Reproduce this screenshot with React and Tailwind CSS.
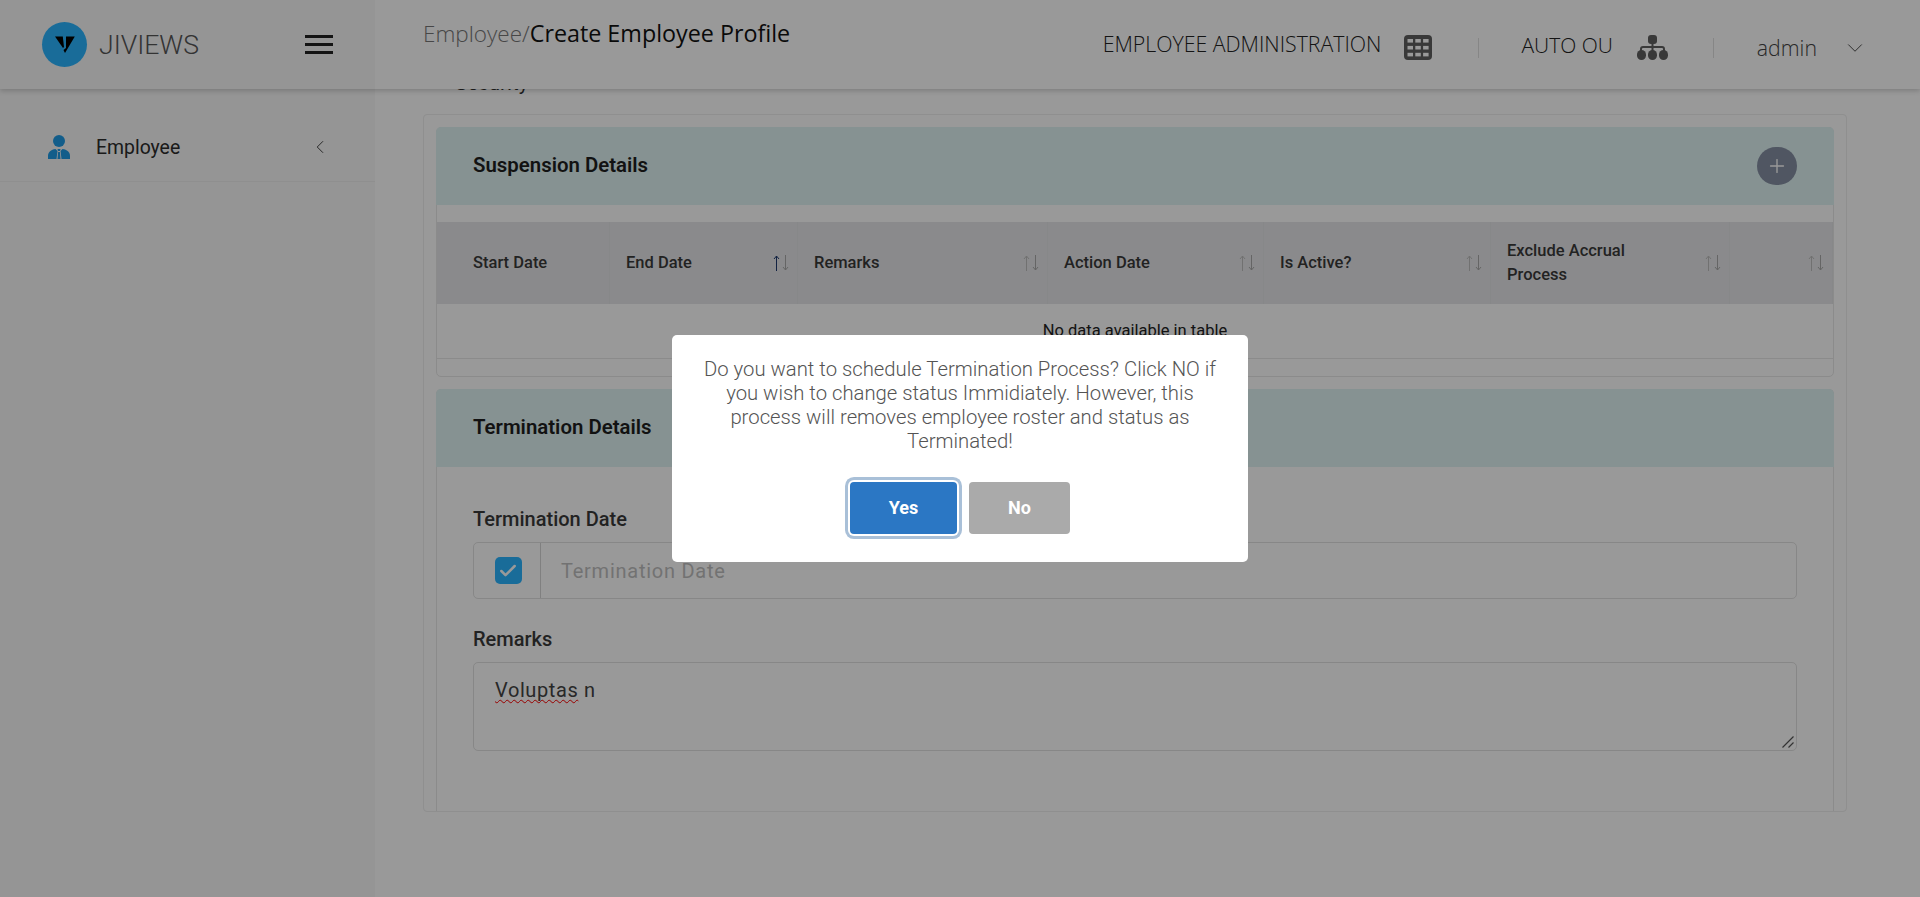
import React from "react";
import { ChevronDown, ChevronLeft, Plus, Check } from "lucide-react";

const roboto = "font-['Roboto',sans-serif]";

function SortIcon({ active }) {
  return (
    <svg width="18" height="18" viewBox="0 0 18 18" fill="none" strokeWidth="1" className="shrink-0">
      <path d="M4.500 17V2M2 5l2.500-3L7 5" stroke={active ? "#1f3a6e" : "#bdbdbd"} />
      <path d="M13.500 1v15M11 13l2.500 3 2.500-3" stroke="#a8a8a8" />
    </svg>
  );
}

function TableGlyph() {
  const cells = [];
  for (let r = 0; r < 3; r++) for (let c = 0; c < 3; c++) cells.push([c, r]);
  return (
    <svg width="28" height="25" viewBox="0 0 28 25" className="block">
      <rect width="28" height="25" rx="4" fill="#5f5f5f" />
      {cells.map(([c, r]) => (
        <rect key={`${c}-${r}`} x={3.5 + c * 7.8} y={4 + r * 6.9} width="5.5" height="3.6" fill="#ffffff" />
      ))}
    </svg>
  );
}

function SitemapGlyph() {
  return (
    <svg width="31" height="25" viewBox="0 0 31 25" fill="#5f5f5f" className="block">
      <rect x="11" y="0" width="9" height="9" rx="3" />
      <path d="M14.500 9h2v2h8.500a3 3 0 0 1 3 3v2h-2v-2a1 1 0 0 0-1-1h-8.500v3h-2v-3H6a1 1 0 0 0-1 1v2H3v-2a3 3 0 0 1 3-3h8.500z" />
      <rect x="0" y="15" width="9" height="10" rx="4.5" />
      <rect x="11" y="15" width="9" height="10" rx="4.5" />
      <rect x="22" y="15" width="9" height="10" rx="4.5" />
    </svg>
  );
}

function LogoMark() {
  return (
    <div className="flex h-[45px] w-[45px] items-center justify-center rounded-full bg-[#2bb5ff]">
      <svg width="20" height="17" viewBox="0 0 20 17" fill="#000" className="block">
        <path d="M0 .5h7.800l1.200 10.500-1 1z" />
        <path d="M11 .5h8.800L10 17l-1.500-3L11 12z" />
      </svg>
    </div>
  );
}

function PersonIcon() {
  return (
    <svg width="22" height="24" viewBox="0 0 22 24" fill="#1e9be6" className="block">
      <circle cx="11" cy="6" r="6" />
      <path d="M0 24v-3c0-4 3-6.500 7.500-7l2 2-1 8z" />
      <path d="M22 24v-3c0-4-3-6.500-7.500-7l-2 2 1 8z" />
      <path d="M9.500 14h3l-.5 2h-2zM10.100 17h1.800l.6 7H9.500z" />
    </svg>
  );
}

const cols = [
  { label: "Start Date", w: "w-[173px]", pl: "pl-[36px]" },
  { label: "End Date", w: "w-[188px]", active: true },
  { label: "Remarks", w: "w-[250px]" },
  { label: "Action Date", w: "w-[216px]" },
  { label: "Is Active?", w: "w-[227px]" },
  { label: "Exclude Accrual Process", w: "w-[239px]" },
  { label: "", w: "flex-1" },
];

function PanelHeader({ title, action }) {
  return (
    <div className="-mx-px -mt-px flex h-[78px] items-center justify-between rounded-t-[5px] bg-[#dff3f3] pl-[37px] pr-[37px]">
      <h3 className="pb-[2px] text-[20.400px] font-semibold text-[#1f1f1f]">{title}</h3>
      {action}
    </div>
  );
}

export default function App() {
  return (
    <div className={`${roboto} relative flex h-screen flex-col overflow-hidden bg-white text-[#333]`}>
      <header className="relative z-10 flex h-[89px] shrink-0 bg-white shadow-[0_2px_5px_rgba(0,0,0,0.18)]">
        <div className="flex w-[375px] shrink-0 items-center justify-between bg-[#f8f8f8] pl-[42px] pr-[42px]">
          <div className="flex items-center gap-[12px]">
            <LogoMark />
            <span className="text-[26.6px] font-light text-[#555]">JIVIEWS</span>
          </div>
          <div className="flex w-[28px] flex-col gap-[5px]">
            <span className="h-[3px] bg-[#222]" />
            <span className="h-[3px] bg-[#222]" />
            <span className="h-[3px] bg-[#222]" />
          </div>
        </div>
        <div className="flex min-w-0 flex-1 items-start justify-between pl-[48px] pr-[52px]">
          <div className="mt-[17px] whitespace-nowrap font-['Open_Sans',sans-serif] leading-[32px]">
            <span className="text-[22.5px] font-light text-[#777]">Employee/</span>
            <span className="text-[23.300px] font-medium text-[#111]">Create Employee Profile</span>
          </div>
          <div className="mt-[34px] flex items-center whitespace-nowrap font-['Open_Sans',sans-serif] text-[#222]">
            <span className="mb-[7px] text-[21.300px] font-light leading-[20px]">EMPLOYEE ADMINISTRATION</span>
            <span className="ml-[23px]"><TableGlyph /></span>
            <span className="ml-[46px] h-[20px] w-px bg-[#e0e0e0]" />
            <span className="mb-[5px] ml-[42px] text-[21px] font-light leading-[20px]">AUTO OU</span>
            <span className="ml-[24px]"><SitemapGlyph /></span>
            <span className="ml-[45px] h-[20px] w-px bg-[#e0e0e0]" />
            <span className="ml-[43px] text-[21.300px] font-light leading-[24px] text-[#444]">admin</span>
            <ChevronDown size={26} strokeWidth={0.8} className="ml-[25px] text-[#333]" />
          </div>
        </div>
      </header>

      <div className="flex min-h-0 flex-1">
        <aside className="w-[375px] shrink-0 bg-[#f8f8f8]">
          <nav className="mt-[28px] flex h-[65px] items-center border-b border-[#eeeeee] pb-[4px] pl-[48px] pr-[44px]">
            <PersonIcon />
            <span className="ml-[26px] mt-[2px] flex-1 text-[19.400px] text-[#2c2c2c]">Employee</span>
            <ChevronLeft size={22} strokeWidth={1} className="text-[#333]" />
          </nav>
        </aside>

        <main className="min-w-0 flex-1 pl-[48px] pr-[73px]">
          <div className="-mt-[18px] h-[43px] pl-[32px] text-[20.500px] leading-[24px] text-[#333]">Security</div>

          <section className="flex h-[698px] flex-col gap-[12px] rounded-[4px] border border-[#eeeeee] px-[12px] pt-[12px]">
            <div className="h-[250px] shrink-0 rounded-[5px] border border-[#e8e8e8]">
              <PanelHeader
                title="Suspension Details"
                action={
                  <button className="flex h-[38px] w-[40px] items-center justify-center rounded-full bg-[#858fa3] text-white">
                    <Plus size={22} strokeWidth={1.5} />
                  </button>
                }
              />
              <div className="mt-[17px] flex h-[82px] bg-[#e6e7e9]">
                {cols.map((c, i) => (
                  <div
                    key={i}
                    className={`${c.w} ${c.pl || "pl-[16px]"} flex items-center justify-between border-r border-[#e2e3e5] pr-[7px] text-[16.500px] font-medium leading-[24px] text-[#3a3a3a]`}
                  >
                    <span className="max-w-[160px]">{c.label}</span>
                    {i > 0 && <SortIcon active={c.active} />}
                  </div>
                ))}
              </div>
              <div className="flex h-[55px] items-center justify-center border-b border-[#e8e8e8] text-[16.500px] text-[#222]">
                No data available in table
              </div>
            </div>

            <div className="flex-1 rounded-t-[5px] border-x border-t border-[#e8e8e8]">
              <PanelHeader title="Termination Details" />
              <div className="px-[36px] pt-[40px]">
                <label className="block text-[20px] font-medium leading-[24px] text-[#3a3a3a]">Termination Date</label>
                <div className="mt-[11px] flex h-[57px] rounded-[5px] border border-[#e2e2e2]">
                  <div className="flex w-[67px] shrink-0 items-center justify-center border-r border-[#d5d5d5] pl-[2px]">
                    <span className="flex h-[27px] w-[27px] items-center justify-center rounded-[5px] bg-[#2bb5ff] text-white">
                      <Check size={20} strokeWidth={3} />
                    </span>
                  </div>
                  <span className="flex items-center pl-[20px] text-[20px] tracking-[0.75px] text-[#bfbfbf]">Termination Date</span>
                </div>
                <label className="mt-[28px] block text-[20px] font-medium leading-[24px] text-[#3a3a3a]">Remarks</label>
                <div className="relative mt-[11px] h-[89px] rounded-[5px] border border-[#e2e2e2] px-[21px] pt-[15px] text-[20px] leading-[24px] tracking-[0.6px] text-[#444]">
                  <span className="underline decoration-[#ff0000] decoration-wavy decoration-1 underline-offset-2 [text-decoration-skip-ink:none]">Voluptas</span> n
                  <svg width="12" height="12" viewBox="0 0 12 12" stroke="#555" strokeWidth="1.2" className="absolute bottom-[2px] right-[2px]">
                    <path d="M0.500 11.500L11.500 0.500M6.500 11.500L11.500 6.500" />
                  </svg>
                </div>
              </div>
            </div>
          </section>
        </main>
      </div>

      <div className="absolute inset-0 z-30 flex items-start justify-center bg-black/40 pt-[335px]">
        <div className="flex h-[227px] w-[576px] flex-col items-center rounded-[5px] bg-white px-[30px] pt-[22px]">
          <p className="text-center text-[20.300px] font-light leading-[24px] text-[#545454]">
            Do you want to schedule Termination Process? Click NO if you wish to change status Immidiately. However, this process will removes employee roster and status as Terminated!
          </p>
          <div className="mt-[29px] flex gap-[12px]">
            <button className="h-[52px] w-[107px] rounded-[4px] bg-[#2b77c4] pb-[2px] text-[18px] font-bold text-white shadow-[0_0_0_2px_#fff,0_0_0_5px_#a9c0d8]">Yes</button>
            <button className="h-[52px] w-[101px] rounded-[4px] bg-[#aaaaaa] pb-[2px] text-[18px] font-bold text-white">No</button>
          </div>
        </div>
      </div>
    </div>
  );
}
